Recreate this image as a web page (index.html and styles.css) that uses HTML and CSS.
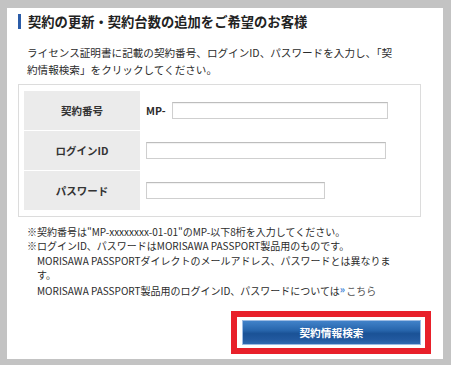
FILE: index.html
```html
<!DOCTYPE html>
<html lang="ja">
<head>
<meta charset="utf-8">
<title>契約の更新・契約台数の追加をご希望のお客様</title>
<link rel="stylesheet" href="styles.css">
</head>
<body>
<div class="panel">
  <h2 class="title">契約の更新・契約台数の追加をご希望のお客様</h2>
  <p class="lead">ライセンス証明書に記載の契約番号、ログインID、パスワードを入力し、「契約情報検索」をクリックしてください。</p>
  <div class="formbox">
    <div class="row">
      <div class="label">契約番号</div>
      <div class="value"><span class="prefix">MP-</span><input class="field field-no" type="text"></div>
    </div>
    <div class="row">
      <div class="label">ログインID</div>
      <div class="value"><input class="field field-id" type="text"></div>
    </div>
    <div class="row">
      <div class="label">パスワード</div>
      <div class="value"><input class="field field-pw" type="password"></div>
    </div>
  </div>
  <div class="notes">
    <p>※契約番号は"MP-xxxxxxxx-01-01"のMP-以下8桁を入力してください。</p>
    <p>※ログインID、パスワードはMORISAWA PASSPORT製品用のものです。</p>
    <div class="indent">
      <p>MORISAWA PASSPORTダイレクトのメールアドレス、パスワードとは異なります。</p>
      <p>MORISAWA PASSPORT製品用のログインID、パスワードについては<a class="link" href="#"><span class="raquo">»</span>こちら</a></p>
    </div>
  </div>
  <div class="actions">
    <div class="highlight">
      <button class="btn" type="button">契約情報検索</button>
    </div>
  </div>
</div>
</body>
</html>
```

FILE: styles.css
```css
* { box-sizing: border-box; }
html, body { margin: 0; }
body {
  background: #c3c3c3;
  padding: 8px 8px 6px 7px;
  font-family: "Noto Sans CJK JP", "Noto Sans", sans-serif;
  color: #2b2b2b;
}
.panel {
  background: #fff;
  height: 351px;
  padding: 6px 22px 0 11px;
  display: flex;
  flex-direction: column;
}
.title {
  margin: 0;
  border-left: 3px solid #2b5ca8;
  padding-left: 7px;
  font-size: 13.3px;
  line-height: 15px;
  font-weight: bold;
  color: #222;
}
.lead {
  margin: 15px 0 0 0;
  padding: 0 26px 0 9px;
  font-size: 10.6px;
  line-height: 17px;
}
.formbox {
  margin-top: 6px;
  border: 1px solid #dcdcdc;
  padding: 6px 5px;
  display: flex;
  flex-direction: column;
  gap: 1px;
}
.row {
  display: flex;
  height: 39px;
}
.label {
  width: 116px;
  background: #ebebeb;
  display: flex;
  align-items: center;
  justify-content: center;
  font-size: 10.5px;
  font-weight: bold;
  color: #333;
}
.value {
  display: flex;
  align-items: center;
  padding-left: 6px;
  font-size: 10.5px;
  font-weight: bold;
}
.prefix { width: 26px; }
.field {
  height: 17px;
  border: 1px solid #cfcfcf;
  border-top-color: #bdbdbd;
  background: #fff;
  padding: 0;
  margin: 0;
  box-shadow: inset 0 1px 1px rgba(0,0,0,0.06);
}
.field-no { width: 216px; }
.field-id { width: 240px; }
.field-pw { width: 179px; }
.notes {
  margin-top: 8px;
  padding-left: 9px;
  padding-right: 24px;
  font-size: 10px;
  line-height: 14.3px;
}
.notes p { margin: 0; }
.indent { padding-left: 10px; }
.link {
  color: #555;
  text-decoration: none;
}
.raquo {
  color: #3c82d6;
  font-size: 10px;
  font-weight: bold;
  vertical-align: 2px;
  margin-right: 1px;
}
.actions {
  margin-top: auto;
  margin-bottom: 5px;
  display: flex;
  justify-content: flex-end;
  margin-right: -10px;
}
.highlight {
  border: 6px solid #e8202a;
  width: 200px;
  height: 43px;
  padding: 3px 4px 3px 5px;
}
.btn {
  width: 179px;
  height: 25px;
  border: 1px solid #9dbce4;
  background: linear-gradient(#4182c9 0%, #2866ad 40%, #1a5296 55%, #22599f 80%, #2f6bb2 100%);
  color: #fff;
  font-family: "Noto Sans CJK JP", sans-serif;
  font-size: 10.7px;
  font-weight: bold;
  padding: 0;
  display: block;
}
```
